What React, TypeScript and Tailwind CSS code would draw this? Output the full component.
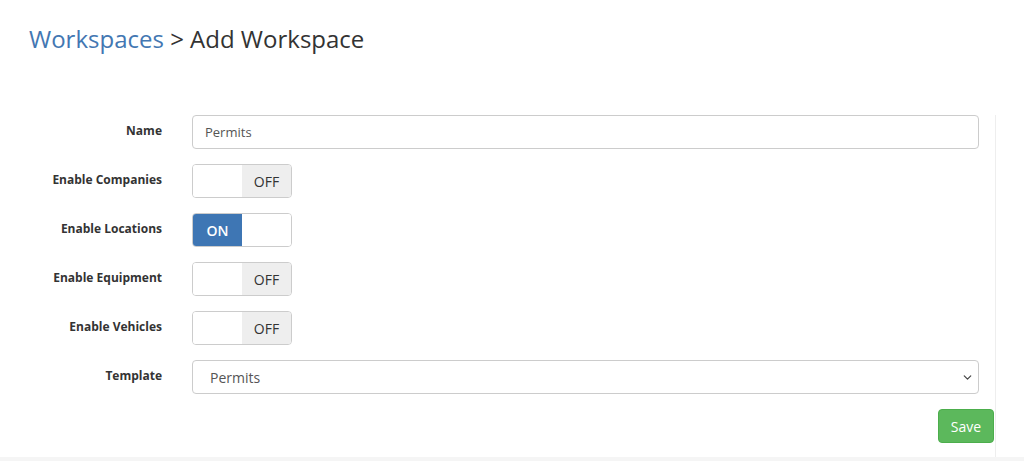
import { ChevronDown } from "lucide-react";

function Toggle({ on }: { on: boolean }) {
  return (
    <div className="flex h-[34px] w-[100px] overflow-hidden rounded border border-[#ccc] text-[14px]">
      {on ? (
        <>
          <div className="flex w-1/2 items-center justify-center bg-[#3e76b4] font-semibold text-white">ON</div>
          <div className="w-1/2 bg-white" />
        </>
      ) : (
        <>
          <div className="w-1/2 bg-white" />
          <div className="flex w-1/2 items-center justify-center bg-[#eeeeee] text-[#333]">OFF</div>
        </>
      )}
    </div>
  );
}

function Row({ label, children }: { label: string; children: React.ReactNode }) {
  return (
    <div className="flex items-center">
      <label className="w-[162px] shrink-0 pb-[2px] text-right text-[12px] font-bold text-[#333]">{label}</label>
      <div className="ml-[30px] flex-1">{children}</div>
    </div>
  );
}

export default function App() {
  const toggles: [string, boolean][] = [
    ["Enable Companies", false],
    ["Enable Locations", true],
    ["Enable Equipment", false],
    ["Enable Vehicles", false],
  ];
  return (
    <div className="flex h-[461px] flex-col bg-white" style={{ fontFamily: '"Open Sans", sans-serif' }}>
      <h1 className="px-[29px] pt-[22px] text-[24px] leading-[34px] text-[#333]">
        <span className="text-[#4377b2]">Workspaces</span> &gt; Add Workspace
      </h1>
      <div className="mt-[59px] flex flex-1">
        <div className="w-[996px] border-r border-[#eeeeee] pr-[16px]">
          <div className="flex flex-col gap-[15px]">
            <Row label="Name">
              <input
                defaultValue="Permits"
                className="h-[34px] w-full rounded border border-[#ccc] px-3 text-[13px] text-[#555] outline-none"
              />
            </Row>
            {toggles.map(([label, on]) => (
              <Row key={label} label={label}>
                <Toggle on={on} />
              </Row>
            ))}
            <Row label="Template">
              <div className="flex h-[34px] w-full items-center justify-between rounded border border-[#ccc] pl-[17px] pr-[4px] text-[14px] text-[#555]">
                <span>Permits</span>
                <ChevronDown className="h-[13px] w-[13px] text-[#444]" strokeWidth={2.25} />
              </div>
            </Row>
          </div>
          <div className="mt-[15px] flex justify-end">
            <button className="mr-[-15px] h-[34px] w-[56px] rounded border border-[#4cae4c] bg-[#5cb85c] text-[14px] text-white">
              Save
            </button>
          </div>
        </div>
      </div>
      <div className="h-[4px] bg-[#f5f5f5]" />
    </div>
  );
}
